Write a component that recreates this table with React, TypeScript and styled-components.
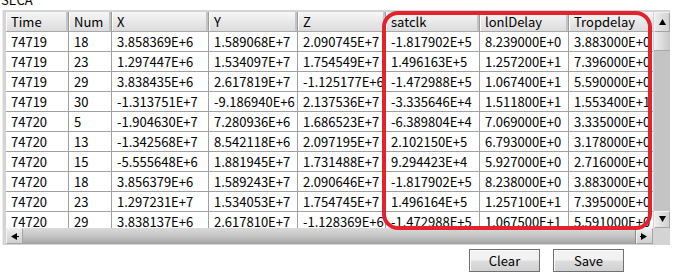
import React from "react";
import styled, { createGlobalStyle } from "styled-components";

const Global = createGlobalStyle`
  html, body { margin: 0; padding: 0; background: #ffffff; }
  body { font-family: "Noto Sans CJK SC", "Noto Sans", sans-serif; }
`;

const COLS = "63px 43px 97px 89px 88px 94px 89px 89px";
const FONT = `"Noto Sans CJK SC", "Noto Sans", sans-serif`;

const Page = styled.div`
  position: relative;
  width: 680px;
  height: 275px;
  overflow: hidden;
  display: flex;
  flex-direction: column;
  background: #fff;
`;

const Title = styled.div`
  margin-top: -8px;
  height: 18px;
  line-height: 16px;
  font-size: 13px;
  font-family: ${FONT};
  color: #000;
  padding-left: 1px;
`;

const Frame = styled.div`
  margin-left: 2px;
  width: 668px;
  height: 235px;
  box-sizing: border-box;
  padding: 2px 1px 1px 3px;
  background: #d4d4d4;
  border-left: 1px solid #ececec;
  display: grid;
  grid-template-columns: 647px 16px;
  grid-template-rows: 216px 17px;
  column-gap: 1px;
`;

const TableArea = styled.div`
  overflow: hidden;
  background: #fff;
  display: flex;
  flex-direction: column;
`;

const Row = styled.div`
  display: grid;
  grid-template-columns: ${COLS};
  height: 20px;
  flex: none;
`;

const HeadCell = styled.div`
  box-sizing: border-box;
  height: 20px;
  padding-left: 5px;
  font-size: 13px;
  line-height: 19px;
  font-family: ${FONT};
  color: #000;
  white-space: nowrap;
  overflow: hidden;
  background: linear-gradient(#f6f6f6, #dcdcdc);
  border-right: 1px solid #9a9a9a;
  border-bottom: 1px solid #a8a8a8;
  box-shadow: inset -2px 0 0 #c4c4c4, inset 1px 0 0 #ffffff;
`;

const Cell = styled.div`
  box-sizing: border-box;
  height: 20px;
  padding-left: 5px;
  font-size: 13px;
  line-height: 19px;
  font-family: ${FONT};
  color: #000;
  white-space: nowrap;
  overflow: hidden;
  background: #fff;
  border-right: 1px solid #a0a0a0;
  border-bottom: 1px solid #a0a0a0;
`;

const VScroll = styled.div`
  display: flex;
  flex-direction: column;
  background: #c6c6c6;
`;

const ArrowButton = styled.div<{ $h: number }>`
  flex: none;
  height: ${(p) => p.$h}px;
  box-sizing: border-box;
  display: flex;
  align-items: center;
  justify-content: center;
  background: linear-gradient(90deg, #ececec, #d0d0d0);
  border: 1px solid #a4a4a4;
  border-top-color: #f4f4f4;
  border-left-color: #f4f4f4;
`;

const HArrowButton = styled(ArrowButton)`
  width: 17px;
  height: 16px;
  background: linear-gradient(#ececec, #cfcfcf);
`;

const VThumb = styled.div`
  flex: none;
  height: 18px;
  background: linear-gradient(90deg, #f0f0f0, #c8c8c8);
  border-bottom: 1px solid #a8a8a8;
`;

const VTrack = styled.div`
  flex: 1;
  background: #c4c4c4;
`;

const HScroll = styled.div`
  display: flex;
  align-items: stretch;
  height: 16px;
`;

const HTrack = styled.div`
  flex: 1;
  background: linear-gradient(#dadada, #c2c2c2 55%, #a2a2a2);
  border-right: 1px solid #8a8a8a;
`;

const Corner = styled.div`
  background: #d4d4d4;
`;

const ButtonRow = styled.div`
  display: flex;
  justify-content: flex-end;
  gap: 13px;
  margin-top: 4px;
  padding-right: 56px;
`;

const Button = styled.button`
  width: 71px;
  height: 23px;
  box-sizing: border-box;
  padding: 0;
  font-size: 13px;
  font-family: ${FONT};
  color: #000;
  border: 1px solid #707070;
  background: linear-gradient(#f2f2f2 45%, #dddddd 55%, #d0d0d0);
  box-shadow: inset 1px 1px 0 #fcfcfc;
`;

const Highlight = styled.div`
  position: absolute;
  left: 382px;
  top: 11px;
  width: 270px;
  height: 219px;
  box-sizing: border-box;
  border: 4px solid #e4222c;
  border-radius: 16px;
  pointer-events: none;
`;

const headers = ["Time", "Num", "X", "Y", "Z", "satclk", "lonlDelay", "Tropdelay"];

const rows: string[][] = [
  ["74719", "18", "3.858369E+6", "1.589068E+7", "2.090745E+7", "-1.817902E+5", "8.239000E+0", "3.883000E+0"],
  ["74719", "23", "1.297447E+6", "1.534097E+7", "1.754549E+7", "1.496163E+5", "1.257200E+1", "7.396000E+0"],
  ["74719", "29", "3.838435E+6", "2.617819E+7", "-1.125177E+6", "-1.472988E+5", "1.067400E+1", "5.590000E+0"],
  ["74719", "30", "-1.313751E+7", "-9.186940E+6", "2.137536E+7", "-3.335646E+4", "1.511800E+1", "1.553400E+1"],
  ["74720", "5", "-1.904630E+7", "7.280936E+6", "1.686523E+7", "-6.389804E+4", "7.069000E+0", "3.335000E+0"],
  ["74720", "13", "-1.342568E+7", "8.542118E+6", "2.097195E+7", "2.102150E+5", "6.793000E+0", "3.178000E+0"],
  ["74720", "15", "-5.555648E+6", "1.881945E+7", "1.731488E+7", "9.294423E+4", "5.927000E+0", "2.716000E+0"],
  ["74720", "18", "3.856379E+6", "1.589243E+7", "2.090646E+7", "-1.817902E+5", "8.238000E+0", "3.883000E+0"],
  ["74720", "23", "1.297231E+7", "1.534053E+7", "1.754745E+7", "1.496164E+5", "1.257100E+1", "7.395000E+0"],
  ["74720", "29", "3.838137E+6", "2.617810E+7", "-1.128369E+6", "-1.472988E+5", "1.067500E+1", "5.591000E+0"],
];

const Tri = ({ dir }: { dir: "up" | "down" | "left" | "right" }) => {
  const pts: Record<string, string> = {
    up: "1,7 8,7 4.5,1",
    down: "1,1 8,1 4.5,7",
    left: "7,1 7,8 1,4.5",
    right: "1,1 1,8 7,4.5",
  };
  return (
    <svg width="9" height="9" viewBox="0 0 9 9">
      <polygon points={pts[dir]} fill="#000" />
      {dir === "left" && <rect x="7" y="4" width="2" height="1" fill="#000" />}
      {dir === "right" && <rect x="0" y="4" width="1" height="1" fill="#000" />}
    </svg>
  );
};

export default function App() {
  return (
    <Page>
      <Global />
      <Title>SECA</Title>
      <Frame>
        <TableArea>
          <Row>
            {headers.map((h) => (
              <HeadCell key={h}>{h}</HeadCell>
            ))}
          </Row>
          {rows.map((r, i) => (
            <Row key={i}>
              {r.map((c, j) => (
                <Cell key={j}>{c}</Cell>
              ))}
            </Row>
          ))}
        </TableArea>
        <VScroll>
          <ArrowButton $h={20}>
            <Tri dir="up" />
          </ArrowButton>
          <VThumb />
          <VTrack />
          <ArrowButton $h={17}>
            <Tri dir="down" />
          </ArrowButton>
        </VScroll>
        <HScroll>
          <HArrowButton $h={16}>
            <Tri dir="left" />
          </HArrowButton>
          <HTrack />
          <HArrowButton $h={16}>
            <Tri dir="right" />
          </HArrowButton>
        </HScroll>
        <Corner />
      </Frame>
      <ButtonRow>
        <Button>Clear</Button>
        <Button>Save</Button>
      </ButtonRow>
      <Highlight />
    </Page>
  );
}
